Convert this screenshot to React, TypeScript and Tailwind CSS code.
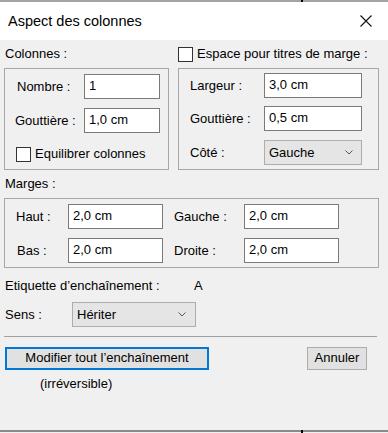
import React from "react";

function Field({ w, value }: { w: string; value: string }) {
  return (
    <div
      className={`${w} h-[25px] bg-white border border-[#7a7a7a] pl-[4px] pb-[2px] flex items-center leading-none`}
    >
      {value}
    </div>
  );
}

function Chevron() {
  return (
    <svg width="8" height="5" viewBox="0 0 8 5" className="shrink-0">
      <path d="M0.5 0.5 L4 4 L7.5 0.5" fill="none" stroke="#555" strokeWidth="1" />
    </svg>
  );
}

function Select({ w, value, pr }: { w: string; value: string; pr: string }) {
  return (
    <div
      className={`${w} h-[25px] bg-[#e5e5e5] border border-[#adadad] pl-[4px] ${pr} pb-[1px] flex items-center justify-between leading-none`}
    >
      <span>{value}</span>
      <Chevron />
    </div>
  );
}

function Check() {
  return <div className="w-[15px] h-[15px] bg-white border border-[#333333] shrink-0" />;
}

export default function App() {
  return (
    <div className="w-[388px] h-[433px] bg-[#f0f0f0] flex flex-col text-[13px] text-black font-['Liberation_Sans',Arial,sans-serif] leading-[16px]">
      <div className="h-[2px] bg-[#a3a3a3] relative shrink-0">
        <span className="absolute left-[301px] top-0 w-[2px] h-[2px] bg-black" />
      </div>
      <div className="h-[38px] bg-white flex items-center justify-between pl-[8px] pr-[16px] shrink-0">
        <span className="text-[14.5px]">Aspect des colonnes</span>
        <svg width="12" height="12" viewBox="0 0 12 12">
          <path d="M0.5 0.5 L11.5 11.5 M11.5 0.5 L0.5 11.5" stroke="#111" strokeWidth="1.1" fill="none" />
        </svg>
      </div>

      <div className="flex-1 flex flex-col pl-[4px] pr-[9px]">
        {/* Row 1 */}
        <div className="flex h-[28px] items-center">
          <div className="w-[165px] pl-[1px]">Colonnes :</div>
          <div className="ml-[9px] flex items-center">
            <Check />
            <span className="ml-[4px]">Espace pour titres de marge :</span>
          </div>
        </div>

        {/* Row 2: group boxes */}
        <div className="flex h-[102px]">
          <div className="w-[165px] h-full border border-[#a7a7a7] pt-[5px] flex flex-col">
            <div className="flex items-center h-[25px]">
              <div className="w-[79px] pl-[12px]">Nombre :</div>
              <Field w="w-[76px]" value="1" />
            </div>
            <div className="flex items-center h-[25px] mt-[9px]">
              <div className="w-[79px] pl-[10px]">Gouttière :</div>
              <Field w="w-[76px]" value="1,0 cm" />
            </div>
            <div className="flex items-center mt-[13px] pl-[11px]">
              <Check />
              <span className="ml-[4px]">Equilibrer colonnes</span>
            </div>
          </div>

          <div className="ml-[9px] w-[201px] h-full border border-[#a7a7a7] pt-[4px] flex flex-col">
            <div className="flex items-center h-[25px]">
              <div className="w-[85px] pl-[11px]">Largeur :</div>
              <Field w="w-[98px]" value="3,0 cm" />
            </div>
            <div className="flex items-center h-[25px] mt-[8px]">
              <div className="w-[85px] pl-[11px]">Gouttière :</div>
              <Field w="w-[98px]" value="0,5 cm" />
            </div>
            <div className="flex items-center h-[25px] mt-[9px]">
              <div className="w-[85px] pl-[11px]">Côté :</div>
              <Select w="w-[98px]" value="Gauche" pr="pr-[8px]" />
            </div>
          </div>
        </div>

        {/* Marges */}
        <div className="flex h-[28px] items-center pl-[1px]">Marges :</div>
        <div className="h-[70px] border border-[#a7a7a7] pt-[5px] flex flex-col">
          <div className="flex items-center h-[25px]">
            <div className="w-[63px] pl-[11px]">Haut :</div>
            <Field w="w-[95px]" value="2,0 cm" />
            <div className="w-[81px] pl-[11px]">Gauche :</div>
            <Field w="w-[95px]" value="2,0 cm" />
          </div>
          <div className="flex items-center h-[25px] mt-[9px]">
            <div className="w-[63px] pl-[12px]">Bas :</div>
            <Field w="w-[95px]" value="2,0 cm" />
            <div className="w-[81px] pl-[11px]">Droite :</div>
            <Field w="w-[95px]" value="2,0 cm" />
          </div>
        </div>

        {/* Etiquette */}
        <div className="flex mt-[10px] pl-[1px]">
          <div className="w-[189px]">Etiquette d’enchaînement :</div>
          <div>A</div>
        </div>

        {/* Sens */}
        <div className="flex items-center mt-[8px] pl-[1px]">
          <div className="w-[67px]">Sens :</div>
          <Select w="w-[124px]" value="Hériter" pr="pr-[9px]" />
        </div>

        {/* Separator */}
        <div className="mt-[9px] h-[1px] w-[373px] bg-[#a0a0a0]" />

        {/* Buttons */}
        <div className="flex items-start mt-[10px] pl-[1px]">
          <div className="flex flex-col items-start w-[204px]">
            <div className="w-[204px] h-[23px] border-2 border-[#0078d7] bg-[#e1e1e1] flex items-center justify-center pb-[1px]">
              Modifier tout l’enchaînement
            </div>
            <div className="mt-[6px] ml-[35px]">(irréversible)</div>
          </div>
          <div className="ml-[98px] w-[60px] h-[23px] border border-[#adadad] bg-[#e1e1e1] flex items-center justify-center pb-[1px]">
            Annuler
          </div>
        </div>
      </div>

      <div className="h-[2px] bg-[#8a8a8a] relative shrink-0 mb-[1px]">
        <span className="absolute left-[301px] top-0 w-[2px] h-[3px] bg-black" />
      </div>
    </div>
  );
}
